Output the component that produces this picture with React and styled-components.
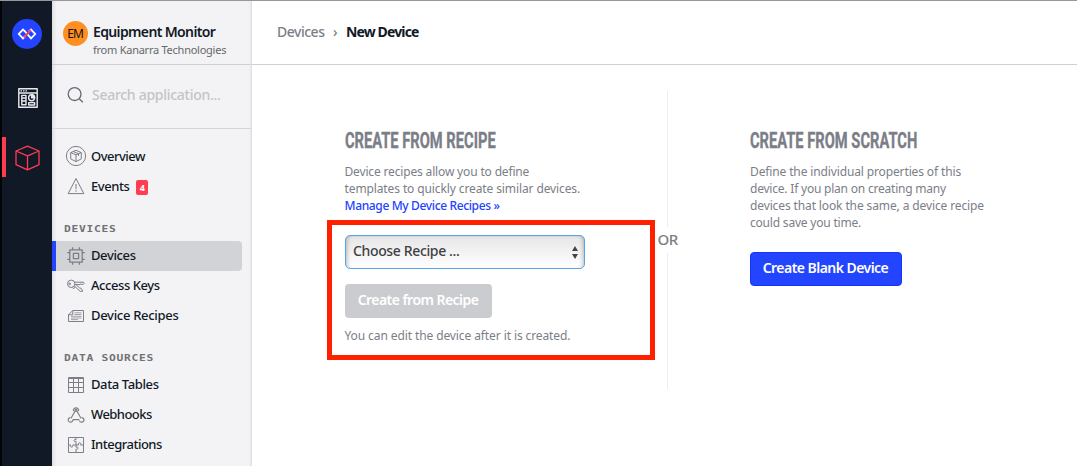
import React from "react";
import styled, { createGlobalStyle } from "styled-components";

const GlobalStyle = createGlobalStyle`
  *, *::before, *::after { box-sizing: border-box; }
  body {
    margin: 0;
    overflow: hidden;
    background: #fff;
    color: #111927;
    font-family: "Noto Sans", sans-serif;
  }
`;

const Shell = styled.div`
  display: grid;
  grid-template-columns: 52px 200px 1fr;
  height: 466px;
  border-top: 1px solid #979799;
`;

/* Product rail */

const Rail = styled.nav`
  display: flex;
  flex-direction: column;
  border-left: 2px solid #020408;
  background: #111927;
`;

const LogoSlot = styled.div`
  display: flex;
  justify-content: center;
  height: 66px;
  padding-top: 18px;
`;

const RailItem = styled.a`
  display: flex;
  align-items: center;
  justify-content: center;
  height: 40px;
  margin-top: ${(p) => p.$gap}px;
  padding: ${(p) => (p.$active ? "1px 4px 0 0" : "0 0 0 1px")};
  border-left: ${(p) => (p.$active ? "4px solid #ff3c50" : "0")};
`;

/* Application sidebar */

const Sidebar = styled.aside`
  border-right: 1px solid #dfdfe2;
  background: #f3f3f5;
  box-shadow: inset 4px 0 4px -3px rgba(17, 25, 39, 0.14), inset -3px 0 3px -3px rgba(17, 25, 39, 0.1);
`;

const AppHeader = styled.header`
  display: flex;
  height: 64px;
  padding: 20px 0 0 11px;
  border-bottom: 1px solid #cfd0d6;
`;

const Avatar = styled.div`
  display: flex;
  align-items: center;
  justify-content: center;
  width: 25px;
  height: 25px;
  margin-right: 5px;
  padding-bottom: 1px;
  border-radius: 50%;
  background: #ff8f20;
  color: #111;
  font-size: 12px;
  letter-spacing: -1px;
  text-indent: -1px;
`;

const AppName = styled.div`
  height: 22px;
  font-size: 14px;
  font-weight: 600;
  line-height: 22px;
  letter-spacing: -0.64px;
  white-space: nowrap;
`;

const AppOwner = styled.div`
  color: #66686c;
  font-size: 11px;
  line-height: 14px;
  letter-spacing: -0.25px;
  white-space: nowrap;
`;

const Search = styled.label`
  display: flex;
  align-items: center;
  gap: 8px;
  height: 64px;
  padding: 0 0 4px 15px;
  border-bottom: 1px solid #d4d5d9;
  color: #c3c4c6;
  font-size: 14px;
  font-weight: 500;
  letter-spacing: -0.28px;
`;

const NavGroup = styled.div`
  padding-top: ${(p) => p.$top}px;
`;

const NavTitle = styled.h2`
  height: 14px;
  margin: 0 0 5px 12px;
  color: #707276;
  font: 700 9px/14px "DejaVu Sans Mono", monospace;
  letter-spacing: 0.58px;
  white-space: nowrap;
  transform: scaleX(1.25);
  transform-origin: left;
`;

const NavItem = styled.a`
  display: flex;
  align-items: center;
  height: 30px;
  margin-right: 9px;
  padding-left: ${(p) => (p.$active ? 8 : 12)}px;
  border-left: ${(p) => (p.$active ? "4px solid #2243ff" : "0")};
  border-radius: 0 4px 4px 0;
  background: ${(p) => (p.$active ? "#d2d3d7" : "transparent")};
  font-size: 13px;
  font-weight: 500;
  letter-spacing: ${(p) => p.$ls}px;
  white-space: nowrap;

  svg { flex: none; margin-right: 3px; }
`;

const NavLabel = styled.span`
  padding-bottom: 2px;
`;

const Badge = styled.span`
  width: 12px;
  height: 15px;
  margin: 2px 0 0 7px;
  border-radius: 2px;
  background: #ff3c50;
  color: #fff;
  font-size: 9px;
  font-weight: 700;
  line-height: 15px;
  text-align: center;
  letter-spacing: 0;
`;

/* Main column */

const Main = styled.main`
  display: flex;
  flex-direction: column;
`;

const Breadcrumbs = styled.header`
  display: flex;
  align-items: center;
  height: 64px;
  padding: 0 0 2px 25px;
  border-bottom: 1px solid #cfd0d6;
  font-size: 14px;
  white-space: nowrap;
`;

const Crumb = styled.span`
  width: 56px;
  color: #7b7e87;
  font-weight: 500;
  letter-spacing: -0.48px;
`;

const CrumbArrow = styled.span`
  width: 13px;
  color: #7b7e87;
  font-weight: 500;
`;

const CrumbCurrent = styled.strong`
  font-weight: 700;
  letter-spacing: -0.87px;
`;

const Options = styled.div`
  display: grid;
  grid-template-columns: 405px 21px 1fr;
  padding-top: 26px;
`;

const Option = styled.section`
  display: flex;
  flex-direction: column;
  align-items: flex-start;
  padding: 38px 0 0 ${(p) => p.$left}px;
`;

const OptionTitle = styled.h1`
  height: 24px;
  margin: 0 0 10px;
  color: #7b7e87;
  font: 700 21.5px/24px Roboto, sans-serif;
  -webkit-text-stroke: 0.35px #7b7e87;
  white-space: nowrap;
  transform: scaleX(0.683);
  transform-origin: left;
`;

const Copy = styled.p`
  margin: 0;
  color: #7b7e87;
  font-size: 12px;
  line-height: 17px;
  white-space: nowrap;
`;

const Line = styled.span`
  display: block;
  letter-spacing: ${(p) => p.$ls}px;
`;

const TextLink = styled.a`
  color: #2243ff;
  font-size: 12px;
  font-weight: 500;
  line-height: 17px;
  letter-spacing: -0.36px;
  white-space: nowrap;
`;

const RecipeSelect = styled.div`
  display: flex;
  align-items: center;
  justify-content: space-between;
  width: 240px;
  height: 34px;
  margin: 21px 0 15px 0.5px;
  padding: 0 5px 3px 7px;
  border: 1px solid #56a5e8;
  border-radius: 5px;
  background: linear-gradient(#e6e6e6, #fff);
  box-shadow: inset 5px 0 4px -4px rgba(0, 0, 0, 0.26), inset -5px 0 4px -4px rgba(0, 0, 0, 0.26),
    inset 0 2px 2px -1px rgba(0, 0, 0, 0.07);
  color: #3f4145;
  font-size: 14px;
  font-weight: 500;
  letter-spacing: -0.36px;

  svg { margin-top: 2px; }
`;

const Button = styled.button`
  display: flex;
  justify-content: center;
  width: ${(p) => p.$width}px;
  height: 34px;
  margin: ${(p) => p.$top}px 0 0 ${(p) => p.$left}px;
  padding: 0 1px 0 0;
  border: ${(p) => (p.disabled ? "0" : "1px solid #1236ff")};
  border-radius: 4px;
  background: ${(p) => (p.disabled ? "#cbccd0" : "#2345ff")};
  color: #fff;
  font: 600 14px/${(p) => (p.disabled ? 32 : 30)}px "Noto Sans", sans-serif;
  letter-spacing: -0.54px;
  white-space: nowrap;
`;

const Note = styled(Copy)`
  margin-top: 9px;
  letter-spacing: -0.1px;
`;

const Divider = styled.div`
  display: flex;
  flex-direction: column;
  align-items: center;
  height: 298px;
  color: #7b7e87;
  font-size: 15px;
  font-weight: 500;
  line-height: 24px;
  letter-spacing: -0.6px;

  &::before, &::after {
    content: "";
    width: 1px;
    flex: 0 0 136px;
    background: #eeeeef;
  }

  &::after { margin-top: 2px; }
`;

const Highlight = styled.div`
  position: absolute;
  top: 220px;
  left: 327px;
  width: 328px;
  height: 140px;
  border: 5px solid #ff2000;
  pointer-events: none;
`;

/* Icons */

const Icon = ({ size = 24, width = 1, color = "#7c7f88", children }) => (
  <svg width={size} height={size} viewBox={`0 0 ${size} ${size}`} fill="none" stroke={color} strokeWidth={width} strokeLinejoin="round">
    {children}
  </svg>
);

const LogoIcon = () => (
  <svg width="30" height="30" viewBox="0 0 30 30" fill="none" strokeWidth="1.8">
    <circle cx="15" cy="15" r="15" fill="#2345ff" />
    <path d="M13.4 17L11 19.4L6.8 15L11 10.6L13.2 12.6" stroke="#fff" />
    <path d="M16.8 12.6L19 10.6L23.2 15L19 19.4L12.6 12" stroke="#fff" />
    <path d="M11.8 18.6L18.8 10.8" stroke="#ff3c50" />
  </svg>
);

const DashboardIcon = () => (
  <Icon size={20} color="#e9eaed" width={1.4}>
    <rect x="0.8" y="0.8" width="18.4" height="18.4" />
    <path d="M1 5H19M2.5 2.9H4M5 2.9H6.5M7.5 2.9H9" />
    <path d="M3.8 7.4H8V10H3.8ZM3.8 10H8V13H3.8ZM3.8 13H8V16.8H3.8ZM10.7 14.6H16.6V17H10.7Z" />
    <circle cx="13.6" cy="9.8" r="3" />
    <path d="M13.6 9.8V6.8A3 3 0 0 1 16.6 9.8Z" fill="#e9eaed" />
  </Icon>
);

const CubeIcon = () => (
  <Icon size={26} color="#ff3c50" width={1.3}>
    <path d="M13.5 1.2L25 6V19.6L13.5 24.8L2 19.6V6ZM2 6L13.5 10.8L25 6M13.5 10.8V24.8" />
  </Icon>
);

const SearchIcon = () => (
  <Icon size={17} width={1.3} color="#646873">
    <circle cx="7.6" cy="8.1" r="6.4" />
    <path d="M12.2 12.7L15.8 16.3" />
  </Icon>
);

const OverviewIcon = () => (
  <Icon>
    <circle cx="12" cy="12" r="9.6" />
    <path d="M12 6.3L17.3 8.6V14.9L12 17.6L6.7 14.9V8.6ZM6.7 8.6L12 10.8L17.3 8.6M12 10.8V17.6M9.3 7.5L14.6 9.8V12" />
  </Icon>
);

const EventsIcon = () => (
  <Icon>
    <path d="M12 4.5L19.8 19.6H4.2Z" />
    <path d="M12 10V15.2M12 16.4V17.8" />
  </Icon>
);

const ChipIcon = () => (
  <Icon width={1.3}>
    <rect x="5.8" y="5.8" width="12.4" height="12.4" />
    <rect x="9.4" y="9.4" width="5.2" height="5.2" />
    <path d="M8.6 5.8V3.2M15.4 5.8V3.2M8.6 18.2V20.8M15.4 18.2V20.8M5.8 8.6H3.2M5.8 15.4H3.2M18.2 8.6H20.8M18.2 15.4H20.8" />
  </Icon>
);

const KeysIcon = () => (
  <Icon>
    <circle cx="7.2" cy="9.8" r="3.7" />
    <circle cx="5.7" cy="9.8" r="0.9" />
    <path d="M10.6 8.2H19.4L20.3 9.2L19.2 10.4H17.8L17 9.8L16 10.6H10.9" />
    <path d="M10.2 11.8L16.2 17.4H18.4V15.8L17.4 15.4L17 14.2L15.6 13.9L12.2 10.8M8.2 13.4L9.4 14.6L11.3 13.2" />
  </Icon>
);

const RecipeIcon = () => (
  <Icon>
    <path d="M8.8 6.5H19.5V17.5H4.5V10.8ZM8.8 6.5V10.8H4.5" />
    <path d="M10.5 8.8H17.5M10.5 10.5H17.5M7 12.3H17.5M7 14H17.5M7 15.6H14" stroke="#a2a4aa" />
  </Icon>
);

const TableIcon = () => (
  <Icon>
    <rect x="4.5" y="4.5" width="15" height="15" />
    <path d="M4.5 5.5H19.5M4.5 9.5H19.5M4.5 14.5H19.5M9.5 5V19.5M14.5 5V19.5" />
  </Icon>
);

const WebhookIcon = () => (
  <Icon width={1.2}>
    <path d="M9.5 8.2A2.6 2.6 0 1 1 14.5 8.2" />
    <path d="M11 8.3L7 15.2M13 8.3L17 15.2M8.8 16.7H15.4" />
    <path d="M6.4 14.6A2.3 2.3 0 1 0 8.8 16.7" />
    <path d="M17.6 14.6A2.3 2.3 0 1 1 15.4 17.6" />
    <circle cx="12" cy="7.4" r="1" />
  </Icon>
);

const PuzzleIcon = () => (
  <Icon>
    <rect x="4.5" y="4.5" width="15" height="15" />
    <path d="M12 4.5V6.8C10.3 6 9.7 7.2 10.2 8.2C10.7 9 11.6 8.5 12 8.3V12M12 12V14.2C13.6 13.6 14.3 14.6 13.8 15.7C13.3 16.6 12.4 16.2 12 16V19.5M4.5 12H6.7C6.2 13.8 7.2 14.5 8.2 14C9.2 13.4 8.8 12.5 8.6 12H14.6C14 10.4 15 9.5 16 9.8C17.3 10.3 16.9 11.3 16.6 12H19.5" />
  </Icon>
);

const SelectArrows = () => (
  <svg width="8" height="14" viewBox="0 0 8 14" fill="#424448">
    <path d="M4 1L7 6H1ZM4 14L1 9H7Z" />
  </svg>
);

export default function App() {
  return (
    <>
      <GlobalStyle />
      <Shell>
        <Rail>
          <LogoSlot><LogoIcon /></LogoSlot>
          <RailItem $gap={11}><DashboardIcon /></RailItem>
          <RailItem $gap={19} $active><CubeIcon /></RailItem>
        </Rail>

        <Sidebar>
          <AppHeader>
            <Avatar>EM</Avatar>
            <div>
              <AppName>Equipment Monitor</AppName>
              <AppOwner>from Kanarra Technologies</AppOwner>
            </div>
          </AppHeader>
          <Search><SearchIcon />Search application...</Search>

          <NavGroup $top={12}>
            <NavItem $ls={-0.5}><OverviewIcon />Overview</NavItem>
            <NavItem $ls={-0.45}><EventsIcon />Events<Badge>4</Badge></NavItem>
          </NavGroup>
          <NavGroup $top={21}>
            <NavTitle>DEVICES</NavTitle>
            <NavItem $active $ls={-0.38}><ChipIcon /><NavLabel>Devices</NavLabel></NavItem>
            <NavItem $ls={-0.43}><KeysIcon /><NavLabel>Access Keys</NavLabel></NavItem>
            <NavItem $ls={-0.3}><RecipeIcon /><NavLabel>Device Recipes</NavLabel></NavItem>
          </NavGroup>
          <NavGroup $top={20}>
            <NavTitle>DATA SOURCES</NavTitle>
            <NavItem $ls={-0.38}><TableIcon /><NavLabel>Data Tables</NavLabel></NavItem>
            <NavItem $ls={-0.56}><WebhookIcon /><NavLabel>Webhooks</NavLabel></NavItem>
            <NavItem $ls={-0.5}><PuzzleIcon /><NavLabel>Integrations</NavLabel></NavItem>
          </NavGroup>
        </Sidebar>

        <Main>
          <Breadcrumbs>
            <Crumb>Devices</Crumb>
            <CrumbArrow>›</CrumbArrow>
            <CrumbCurrent>New Device</CrumbCurrent>
          </Breadcrumbs>

          <Options>
            <Option $left={92.5}>
              <OptionTitle>CREATE FROM RECIPE</OptionTitle>
              <Copy>
                <Line $ls={-0.16}>Device recipes allow you to define</Line>
                <Line $ls={-0.11}>templates to quickly create similar devices.</Line>
              </Copy>
              <TextLink>Manage My Device Recipes »</TextLink>
              <RecipeSelect>Choose Recipe ...<SelectArrows /></RecipeSelect>
              <Button disabled $width={147} $top={0} $left={0.5}>Create from Recipe</Button>
              <Note>You can edit the device after it is created.</Note>
            </Option>
            <Divider>OR</Divider>
            <Option $left={72}>
              <OptionTitle>CREATE FROM SCRATCH</OptionTitle>
              <Copy>
                <Line $ls={-0.13}>Define the individual properties of this</Line>
                <Line $ls={-0.21}>device. If you plan on creating many</Line>
                <Line $ls={-0.12}>devices that look the same, a device recipe</Line>
                <Line $ls={-0.2}>could save you time.</Line>
              </Copy>
              <Button $width={152} $top={21} $left={0}>Create Blank Device</Button>
            </Option>
          </Options>
        </Main>
      </Shell>
      <Highlight />
    </>
  );
}
